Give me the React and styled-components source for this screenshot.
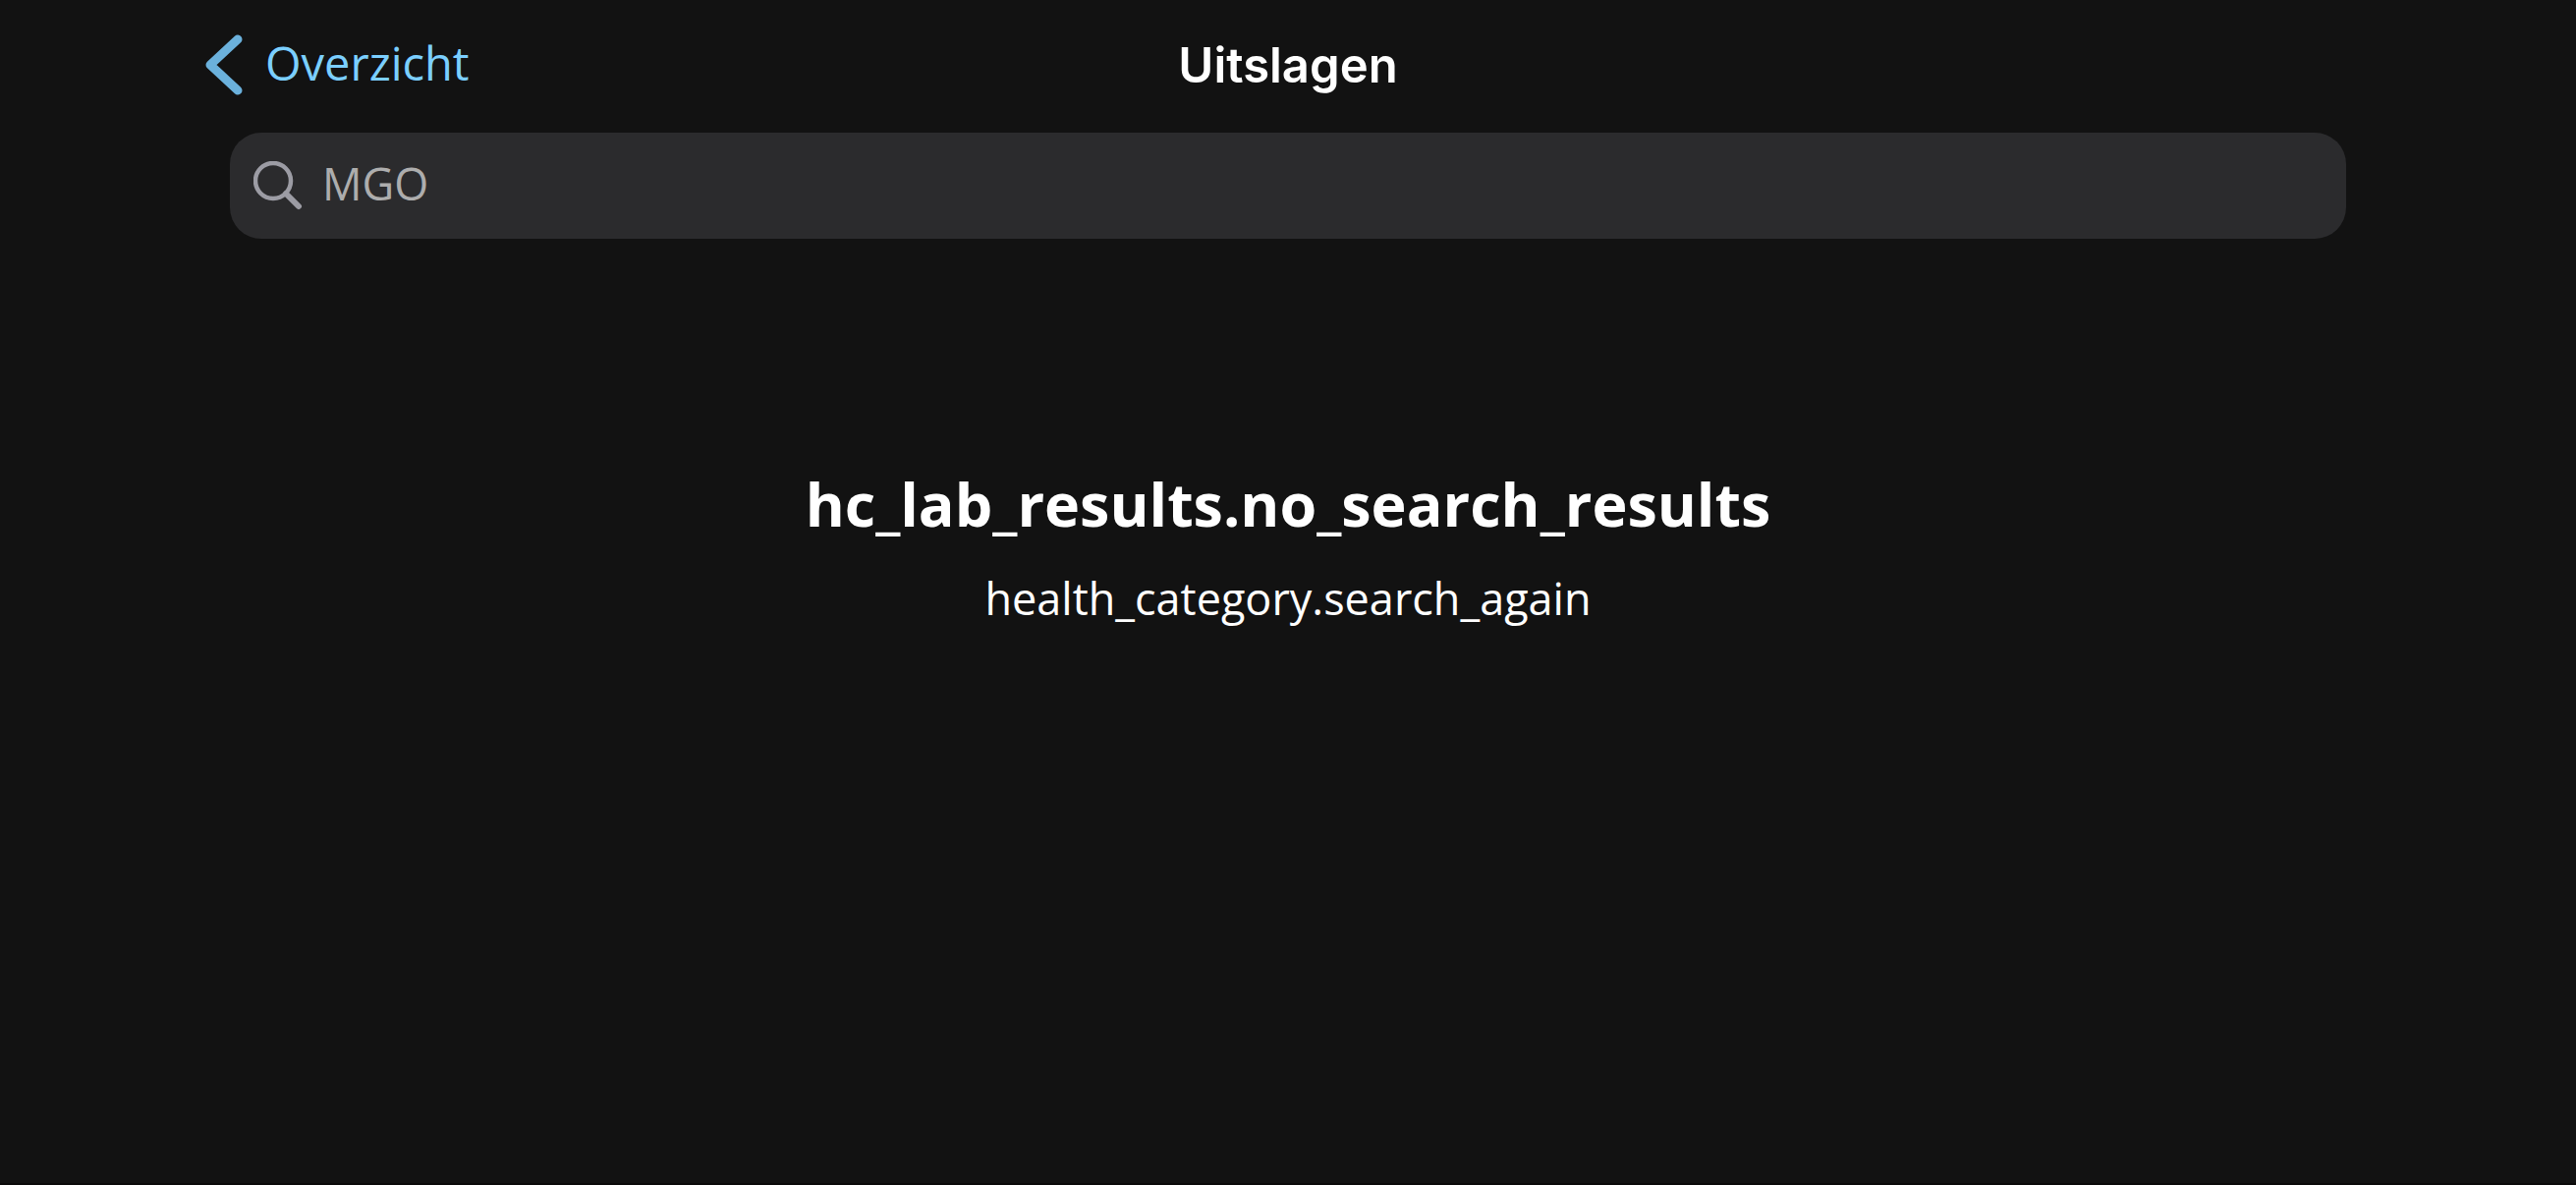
import React from 'react';
import styled, { createGlobalStyle } from 'styled-components';

const GlobalStyle = createGlobalStyle`
  *, *::before, *::after { box-sizing: border-box; }
  body {
    margin: 0;
    background: #121212;
    color: #ffffff;
    font-family: "Open Sans", "Noto Sans", sans-serif;
  }
`;

const Screen = styled.div`
  display: flex;
  flex-direction: column;
  min-height: 100vh;
  border-bottom: 2px solid #0b0a0a;
`;

const NavBar = styled.header`
  display: grid;
  grid-template-columns: 1fr auto 1fr;
  align-items: center;
  height: 132px;
  padding: 0 208px;
`;

const BackButton = styled.button`
  display: flex;
  align-items: center;
  justify-self: start;
  gap: 22px;
  padding: 0;
  border: 0;
  background: none;
  color: #7bcfff;
  font: inherit;
  font-size: 47px;
  line-height: 64px;
  cursor: pointer;
`;

const BackLabel = styled.span`
  padding-bottom: 4px;
`;

const Chevron = styled.svg`
  width: 40px;
  height: 64px;
  color: #6bb1dc;
`;

const Title = styled.h1`
  margin: 0;
  padding-top: 2px;
  font-family: Inter, "Liberation Sans", sans-serif;
  font-size: 49px;
  font-weight: 600;
  line-height: 64px;
`;

const SearchField = styled.label`
  display: flex;
  align-items: center;
  gap: 20px;
  height: 108px;
  margin: 3px 234px 0;
  padding: 0 24px;
  border-radius: 32px;
  background: #2b2b2d;
`;

const SearchIcon = styled.svg`
  flex: none;
  width: 50px;
  height: 50px;
  color: #9c9ca4;
`;

const SearchInput = styled.input`
  flex: 1;
  min-width: 0;
  padding: 0 0 4px;
  border: 0;
  outline: 0;
  background: none;
  color: #adadad;
  font: inherit;
  font-size: 45px;
  line-height: 64px;
`;

const EmptyState = styled.main`
  display: flex;
  flex-direction: column;
  align-items: center;
  gap: 20px;
  padding: 226px 48px 48px;
  text-align: center;
`;

const EmptyHeading = styled.h2`
  margin: 0;
  font-size: 61px;
  font-weight: 700;
  line-height: 88px;
`;

const EmptyText = styled.p`
  margin: 0;
  font-size: 45px;
  line-height: 64px;
`;

export default function App() {
  return (
    <Screen>
      <GlobalStyle />
      <NavBar>
        <BackButton type="button">
          <Chevron viewBox="0 0 40 64" fill="none" aria-hidden="true">
            <path
              d="M34 6 L6 32 L34 58"
              stroke="currentColor"
              strokeWidth="9"
              strokeLinecap="round"
              strokeLinejoin="round"
            />
          </Chevron>
          <BackLabel>Overzicht</BackLabel>
        </BackButton>
        <Title>Uitslagen</Title>
      </NavBar>
      <SearchField>
        <SearchIcon viewBox="0 0 50 50" fill="none" aria-hidden="true">
          <circle cx="20" cy="20" r="18" stroke="currentColor" strokeWidth="4.5" />
          <path d="M33 33 L46 46" stroke="currentColor" strokeWidth="6" strokeLinecap="round" />
        </SearchIcon>
        <SearchInput type="text" aria-label="Zoeken" defaultValue="MGO" />
      </SearchField>
      <EmptyState>
        <EmptyHeading>hc_lab_results.no_search_results</EmptyHeading>
        <EmptyText>health_category.search_again</EmptyText>
      </EmptyState>
    </Screen>
  );
}
